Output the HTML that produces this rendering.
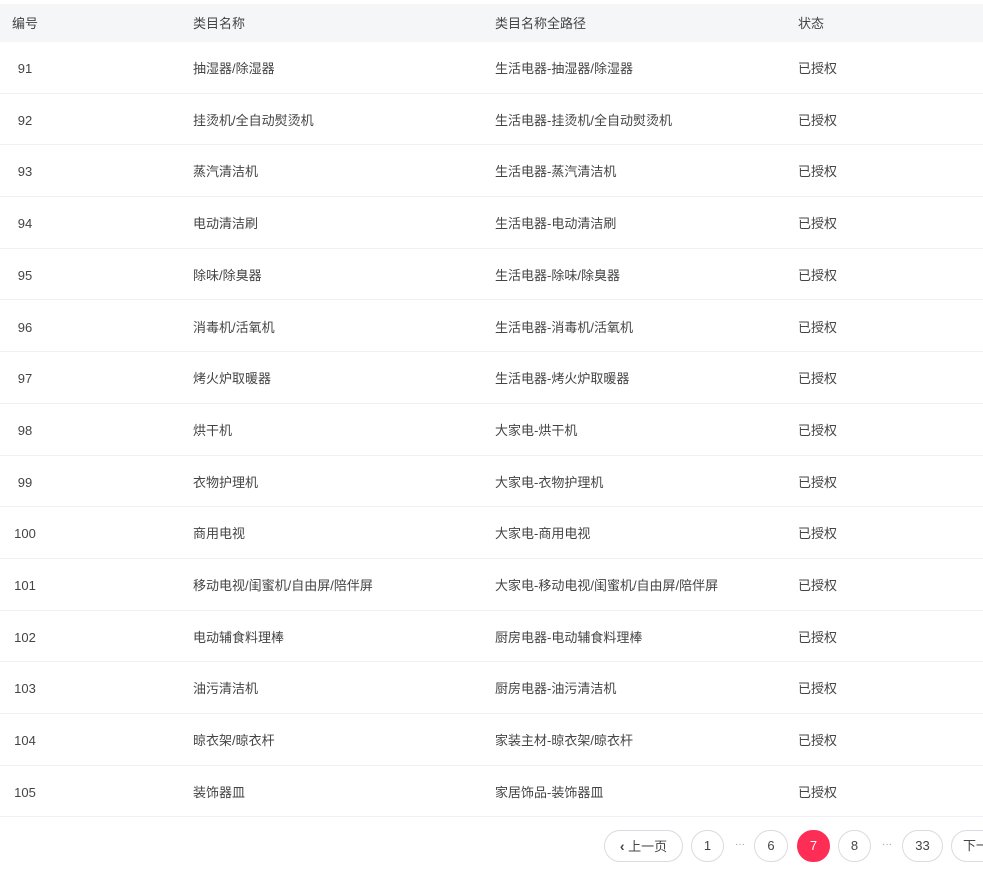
<!DOCTYPE html>
<html><head><meta charset="utf-8"><style>
body{margin:0;background:#fff;font-family:"Liberation Sans","Noto Sans CJK SC",sans-serif;font-size:13px;color:#444;width:983px;height:886px;overflow:hidden;position:relative}
.hd{position:absolute;top:4px;left:0;width:983px;height:38px;background:#f5f6f8}
.row{position:absolute;left:0;width:983px;height:51.7px;border-bottom:1px solid #eef0f3;box-sizing:border-box}
.c{position:absolute;top:1px;white-space:nowrap}
.c1{left:0;width:50px;text-align:center}
.c2{left:193px}.c3{left:495px}.c4{left:798px}
.pg{position:absolute;top:830px;height:32px;box-sizing:border-box;border:1px solid #d9dbe0;border-radius:16px;line-height:30px;text-align:center;font-size:13px;color:#444}
.dots{position:absolute;top:835px;line-height:20px;color:#999;font-size:10px}
</style></head><body>
<div class="hd" style="line-height:38px"><span class="c c1">编号</span><span class="c c2">类目名称</span><span class="c c3">类目名称全路径</span><span class="c c4">状态</span></div>
<div class="row" style="top:42px;line-height:51px"><span class="c c1">91</span><span class="c c2">抽湿器/除湿器</span><span class="c c3">生活电器-抽湿器/除湿器</span><span class="c c4">已授权</span></div>
<div class="row" style="top:93.7px;line-height:51px"><span class="c c1">92</span><span class="c c2">挂烫机/全自动熨烫机</span><span class="c c3">生活电器-挂烫机/全自动熨烫机</span><span class="c c4">已授权</span></div>
<div class="row" style="top:145.4px;line-height:51px"><span class="c c1">93</span><span class="c c2">蒸汽清洁机</span><span class="c c3">生活电器-蒸汽清洁机</span><span class="c c4">已授权</span></div>
<div class="row" style="top:197.1px;line-height:51px"><span class="c c1">94</span><span class="c c2">电动清洁刷</span><span class="c c3">生活电器-电动清洁刷</span><span class="c c4">已授权</span></div>
<div class="row" style="top:248.8px;line-height:51px"><span class="c c1">95</span><span class="c c2">除味/除臭器</span><span class="c c3">生活电器-除味/除臭器</span><span class="c c4">已授权</span></div>
<div class="row" style="top:300.5px;line-height:51px"><span class="c c1">96</span><span class="c c2">消毒机/活氧机</span><span class="c c3">生活电器-消毒机/活氧机</span><span class="c c4">已授权</span></div>
<div class="row" style="top:352.2px;line-height:51px"><span class="c c1">97</span><span class="c c2">烤火炉取暖器</span><span class="c c3">生活电器-烤火炉取暖器</span><span class="c c4">已授权</span></div>
<div class="row" style="top:403.9px;line-height:51px"><span class="c c1">98</span><span class="c c2">烘干机</span><span class="c c3">大家电-烘干机</span><span class="c c4">已授权</span></div>
<div class="row" style="top:455.6px;line-height:51px"><span class="c c1">99</span><span class="c c2">衣物护理机</span><span class="c c3">大家电-衣物护理机</span><span class="c c4">已授权</span></div>
<div class="row" style="top:507.3px;line-height:51px"><span class="c c1">100</span><span class="c c2">商用电视</span><span class="c c3">大家电-商用电视</span><span class="c c4">已授权</span></div>
<div class="row" style="top:559px;line-height:51px"><span class="c c1">101</span><span class="c c2">移动电视/闺蜜机/自由屏/陪伴屏</span><span class="c c3">大家电-移动电视/闺蜜机/自由屏/陪伴屏</span><span class="c c4">已授权</span></div>
<div class="row" style="top:610.7px;line-height:51px"><span class="c c1">102</span><span class="c c2">电动辅食料理棒</span><span class="c c3">厨房电器-电动辅食料理棒</span><span class="c c4">已授权</span></div>
<div class="row" style="top:662.4px;line-height:51px"><span class="c c1">103</span><span class="c c2">油污清洁机</span><span class="c c3">厨房电器-油污清洁机</span><span class="c c4">已授权</span></div>
<div class="row" style="top:714.1px;line-height:51px"><span class="c c1">104</span><span class="c c2">晾衣架/晾衣杆</span><span class="c c3">家装主材-晾衣架/晾衣杆</span><span class="c c4">已授权</span></div>
<div class="row" style="top:765.8px;line-height:51px"><span class="c c1">105</span><span class="c c2">装饰器皿</span><span class="c c3">家居饰品-装饰器皿</span><span class="c c4">已授权</span></div>
<div class="pg" style="left:604px;width:79px"><span style="font-size:14px;font-weight:bold">‹</span> 上一页</div>
<div class="pg" style="left:691px;width:33px">1</div>
<div class="dots" style="left:735px">···</div>
<div class="pg" style="left:754px;width:34px">6</div>
<div class="pg" style="left:797px;width:33px;background:#fd2d55;border-color:#fd2d55;color:#fff">7</div>
<div class="pg" style="left:838px;width:33px">8</div>
<div class="dots" style="left:882px">···</div>
<div class="pg" style="left:902px;width:41px">33</div>
<div class="pg" style="left:951px;width:79px;text-align:left;padding-left:11px">下一页</div>
</body></html>
